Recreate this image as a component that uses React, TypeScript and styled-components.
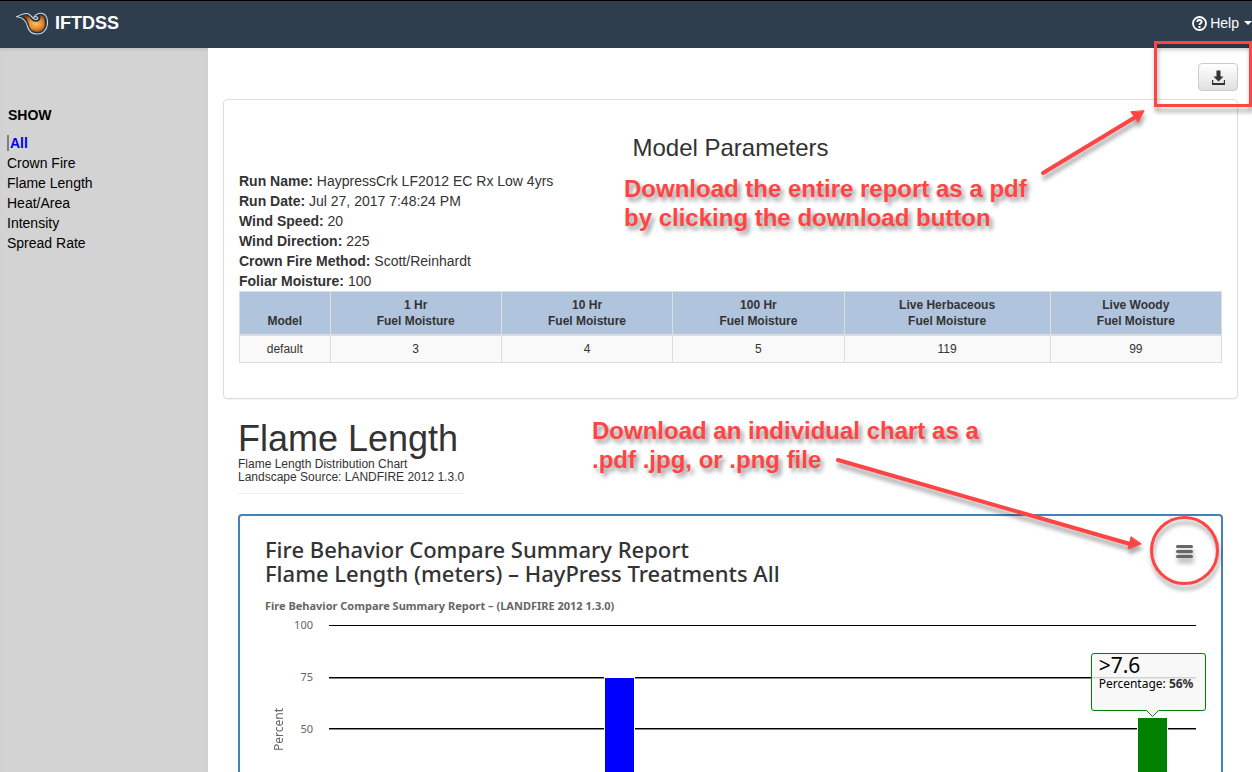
import React from "react";
import styled, { createGlobalStyle } from "styled-components";

const sans = `"Liberation Sans", Arial, sans-serif`;
const chartFont = `"Noto Sans", "Open Sans", sans-serif`;
const red = "#ff4444";

const GlobalStyle = createGlobalStyle`
  *, *::before, *::after { box-sizing: border-box; }
  body {
    margin: 0;
    background: #fff;
    color: #333;
    font: 14px/20px ${sans};
  }
  h1, h2, p, ul { margin: 0; padding: 0; font-weight: 400; }
  button { font-family: inherit; cursor: pointer; }
`;

const Page = styled.div`
  display: flex;
  flex-direction: column;
  height: 100vh;
  overflow: hidden;
`;

const TopBar = styled.header`
  display: flex;
  flex: none;
  align-items: center;
  justify-content: space-between;
  height: 48px;
  padding: 0 0 3px 16px;
  border-top: 1px solid #000;
  background: #2f3e4e;
`;

const Brand = styled.a`
  display: flex;
  align-items: center;
  gap: 7px;
  color: #fff;
  font-size: 18px;
  font-weight: 700;
  text-decoration: none;
`;

const HelpButton = styled.button`
  display: flex;
  align-items: center;
  gap: 3px;
  padding: 0;
  border: 0;
  background: none;
  color: #fff;
  font-size: 14px;
  line-height: 20px;
`;

const Caret = styled.span`
  margin-left: 2px;
  border: 4px solid transparent;
  border-top-color: #fff;
  border-bottom: 0;
`;

const Body = styled.div`
  display: flex;
  flex: 1;
  min-height: 0;
`;

const Sidebar = styled.nav`
  flex: none;
  width: 208px;
  padding: 57px 7px;
  background: #d3d3d3;
  box-shadow: inset 0 4px 4px -3px #bbb;
  color: #000;
`;

const SidebarTitle = styled.h2`
  padding: 0 1px 8px;
  font-size: 14px;
  font-weight: 700;
  line-height: 20px;
`;

const FilterList = styled.ul`
  list-style: none;
`;

const FilterLink = styled.a<{ $active?: boolean }>`
  display: block;
  color: ${(p) => (p.$active ? "#0000ff" : "#000")};
  font-weight: ${(p) => (p.$active ? 700 : 400)};
  text-decoration: none;

  &::before {
    content: "";
    display: ${(p) => (p.$active ? "inline-block" : "none")};
    width: 2px;
    height: 16px;
    margin-right: 1px;
    background: #808080;
    vertical-align: -3px;
  }
`;

const Main = styled.main`
  position: relative;
  flex: 1;
  min-width: 0;
  overflow: hidden;
  padding: 15px 14px 0 15px;
`;

const Toolbar = styled.div`
  display: flex;
  justify-content: flex-end;
  margin-bottom: 8px;
`;

const DownloadButton = styled.button`
  display: grid;
  place-items: center;
  width: 40px;
  height: 28px;
  padding: 0;
  border: 1px solid #ccc;
  border-radius: 4px;
  background: linear-gradient(#fff, #e0e0e0);
`;

const Panel = styled.section`
  padding: 32px 15px 35px;
  border: 1px solid #ddd;
  border-radius: 4px;
  box-shadow: 0 1px 1px rgba(0, 0, 0, 0.05);
`;

const PanelTitle = styled.h2`
  margin-bottom: 7px;
  font-size: 24px;
  line-height: 32px;
  text-align: center;
`;

const FuelTable = styled.table`
  width: 100%;
  border-collapse: collapse;
  font-size: 12px;
  text-align: center;

  th, td { padding: 5px; border: 1px solid #ddd; }
  th {
    border-bottom-width: 2px;
    background: #b0c4de;
    line-height: 16px;
    vertical-align: bottom;
  }
  td { background: #f9f9f9; line-height: 16px; }
`;

const SectionHeading = styled.header`
  width: fit-content;
  margin: 21px 0 0 15px;
  padding-bottom: 9px;
  border-bottom: 1px solid #eee;
  font-size: 12px;
  line-height: 13px;
`;

const SectionTitle = styled.h1`
  font-size: 36px;
  line-height: 38px;
`;

const ChartCard = styled.section`
  position: relative;
  margin: 20px 15px 0;
  padding: 21px 25px 0;
  border: 2px solid #4682b4;
  border-radius: 4px;
  font-family: ${chartFont};
`;

const ChartTitle = styled.h2`
  color: #333;
  font-size: 22px;
  font-weight: 500;
  line-height: 24px;
`;

const ChartSubtitle = styled.p`
  margin-top: 13px;
  color: #666;
  font-size: 11px;
  font-weight: 700;
  line-height: 16px;
`;

const MenuButton = styled.button`
  position: absolute;
  top: 0;
  right: 2px;
  display: grid;
  place-items: center;
  width: 69px;
  height: 69px;
  padding: 2px 0 0;
  border: 3px solid ${red};
  border-radius: 50%;
  background: transparent;
  filter: drop-shadow(1px 5px 2px rgba(0, 0, 0, 0.35));
`;

const Chart = styled.div`
  display: flex;
  margin-top: 11px;
  color: #666;
  font-size: 11px;
`;

const AxisTitle = styled.div`
  height: 208px;
  width: 28px;
  line-height: 28px;
  text-align: center;
  writing-mode: vertical-rl;
  transform: rotate(180deg);
  font-size: 12px;
`;

const AxisLabels = styled.div`
  display: flex;
  flex-direction: column;
  width: 20px;
  margin: -10px 16px 0 0;
  line-height: 20px;
  gap: 32px;
  text-align: right;
`;

const Plot = styled.div`
  position: relative;
  flex: 1;
  height: 208px;
`;

const Tooltip = styled.div`
  position: absolute;
  top: 28px;
  left: 95%;
  width: 115px;
  height: 66px;
  margin-left: -62px;
  padding: 2px 8px;
  color: #000;
  font-size: 12px;
  line-height: 16px;
  white-space: nowrap;

  svg { position: absolute; inset: 0; }
  strong { color: #333; }
`;

const TooltipValue = styled.div`
  position: relative;
  font-size: 21px;
  line-height: 21px;
`;

const TooltipText = styled.div`
  position: relative;
`;

const Highlight = styled.div`
  position: absolute;
  z-index: 2;
  top: 41px;
  right: 0;
  width: 98px;
  height: 66px;
  border: 3px solid ${red};
  filter: drop-shadow(1px 5px 2px rgba(0, 0, 0, 0.35));
  pointer-events: none;
`;

const Callout = styled.p<{ $x: number; $y: number }>`
  position: absolute;
  left: ${(p) => p.$x}px;
  top: ${(p) => p.$y}px;
  color: ${red};
  font-size: 24px;
  font-weight: 700;
  line-height: 29px;
  text-shadow: 3px 4px 4px rgba(0, 0, 0, 0.4);
  white-space: nowrap;
`;

const Arrows = styled.svg`
  position: absolute;
  inset: 0;
  width: 100%;
  height: 100%;
  filter: drop-shadow(1px 5px 2px rgba(0, 0, 0, 0.35));
  pointer-events: none;
`;

const filters = ["All", "Crown Fire", "Flame Length", "Heat/Area", "Intensity", "Spread Rate"];

const runDetails = [
  ["Run Name", "HaypressCrk LF2012 EC Rx Low 4yrs"],
  ["Run Date", "Jul 27, 2017 7:48:24 PM"],
  ["Wind Speed", "20"],
  ["Wind Direction", "225"],
  ["Crown Fire Method", "Scott/Reinhardt"],
  ["Foliar Moisture", "100"],
];

const fuels = [
  ["1 Hr", 3],
  ["10 Hr", 4],
  ["100 Hr", 5],
  ["Live Herbaceous", 119],
  ["Live Woody", 99],
];

const bars = [
  { at: "33.5%", value: 75, color: "#0000ff" },
  { at: "95%", value: 56, color: "#008000" },
];

const FlameLogo = () => (
  <svg width="32" height="23" viewBox="0 0 32 23" aria-hidden="true">
    <defs>
      <radialGradient id="ember" cx="0.6" cy="0.5" r="0.6">
        <stop offset="0" stopColor="#ffc070" />
        <stop offset="0.5" stopColor="#e88a2c" />
        <stop offset="1" stopColor="#7a3c0c" />
      </radialGradient>
    </defs>
    <path
      d="M.7 4.8C4 3 7.500 1.300 11 1.500C15 1.700 15.500 7 19.500 7.500C22 7.700 22.500 5.500 20.500 4.800C19.500 4.500 18.500 4.800 18 5C20 1.500 25 0 28.500 2.500C31.500 5 31.800 9 31.300 13C30.500 18.500 26.500 22 21.500 22C15.500 22 12.500 18.500 11.500 14.500C10.500 10 8.500 5.500 .7 4.800Z"
      fill="#263442"
      stroke="#d5dbe2"
      strokeWidth="1.1"
    />
    <path
      d="M6 4.300C10 2.600 12.500 3.500 14 6C15.500 8.500 17.500 10 20 9.800C23.500 9.500 25.500 7 24 3.200C27.500 3.500 29 6 28.500 9.500C30 15.500 26.500 20 21.500 20C16.500 20 14 17 13.200 13.500C12 8.500 10.500 5 6 4.300Z"
      fill="url(#ember)"
    />
  </svg>
);

const QuestionIcon = () => (
  <svg width="15" height="15" viewBox="0 0 15 15" fill="none" stroke="#fff" aria-hidden="true">
    <circle cx="7.500" cy="7.500" r="6.500" strokeWidth="1.800" />
    <path d="M5.300 6C5.300 3.300 9.700 3.300 9.700 5.800C9.700 7.400 7.500 7.300 7.500 9" strokeWidth="1.900" />
    <path d="M7.500 10v2" strokeWidth="2" />
  </svg>
);

const DownloadIcon = () => (
  <svg width="14" height="15" viewBox="0 0 14 15" fill="#333" aria-hidden="true">
    <path d="M5.500 .5h4v6h3L7.500 11.500L2.500 6.500h3z" />
    <path d="M1 10h1.200v3h10.600V10H14v5H1z" />
  </svg>
);

const MenuIcon = () => (
  <svg width="17" height="14" viewBox="0 0 17 14" aria-hidden="true">
    <path d="M1.500 1.500h14M1.500 6.500h14M1.500 11.500h14" stroke="#666" strokeWidth="3" strokeLinecap="round" />
  </svg>
);

const PlotArea = () => (
  <svg width="100%" height="208" role="img" aria-label="Flame length percentages">
    {[0, 52, 103, 156].map((y) => (
      <g key={y}>
        <rect width="100%" y={y} height="1" fill="#000" />
        <rect width="100%" y={y === 0 ? 0 : y + 1} height="1" fill={y === 0 ? "#000" : "#888"} />
      </g>
    ))}
    {bars.map((bar) => {
      const height = Math.floor(bar.value * 2.08);
      return (
        <g key={bar.at} transform="translate(-15 0)" shapeRendering="crispEdges">
          <rect x={bar.at} y={208 - height} width="30" height={height} fill={bar.color} stroke="#fff" />
        </g>
      );
    })}
  </svg>
);

export default function App() {
  return (
    <Page>
      <GlobalStyle />
      <TopBar>
        <Brand href="#home">
          <FlameLogo />
          IFTDSS
        </Brand>
        <HelpButton type="button">
          <QuestionIcon />
          Help
          <Caret />
        </HelpButton>
      </TopBar>
      <Highlight />
      <Body>
        <Sidebar aria-label="Report sections">
          <SidebarTitle>SHOW</SidebarTitle>
          <FilterList>
            {filters.map((name, i) => (
              <li key={name}>
                <FilterLink href="#report" $active={i === 0}>{name}</FilterLink>
              </li>
            ))}
          </FilterList>
        </Sidebar>
        <Main>
          <Toolbar>
            <DownloadButton type="button" aria-label="Download report">
              <DownloadIcon />
            </DownloadButton>
          </Toolbar>
          <Panel>
            <PanelTitle>Model Parameters</PanelTitle>
            {runDetails.map(([label, value]) => (
              <p key={label}>
                <strong>{label}:</strong> {value}
              </p>
            ))}
            <FuelTable>
              <thead>
                <tr>
                  <th scope="col">Model</th>
                  {fuels.map(([name]) => (
                    <th key={name} scope="col">
                      {name}
                      <br />
                      Fuel Moisture
                    </th>
                  ))}
                </tr>
              </thead>
              <tbody>
                <tr>
                  <td>default</td>
                  {fuels.map(([name, value]) => (
                    <td key={name}>{value}</td>
                  ))}
                </tr>
              </tbody>
            </FuelTable>
          </Panel>
          <SectionHeading>
            <SectionTitle>Flame Length</SectionTitle>
            <p>Flame Length Distribution Chart</p>
            <p>Landscape Source: LANDFIRE 2012 1.3.0</p>
          </SectionHeading>
          <ChartCard>
            <ChartTitle>
              Fire Behavior Compare Summary Report
              <br />
              Flame Length (meters) – HayPress Treatments All
            </ChartTitle>
            <ChartSubtitle>Fire Behavior Compare Summary Report – (LANDFIRE 2012 1.3.0)</ChartSubtitle>
            <MenuButton type="button" aria-label="Chart menu">
              <MenuIcon />
            </MenuButton>
            <Chart>
              <AxisTitle>Percent</AxisTitle>
              <AxisLabels>
                <span>100</span>
                <span>75</span>
                <span>50</span>
              </AxisLabels>
              <Plot>
                <PlotArea />
                <Tooltip>
                  <svg width="115" height="66" aria-hidden="true">
                    <path
                      d="M3 .5H112Q114.500 .5 114.500 3V55Q114.500 57.500 112 57.500H67.500L61.500 63.500L55.500 57.500H3Q.5 57.500 .5 55V3Q.5 .5 3 .5Z"
                      fill="rgba(247,247,247,0.85)"
                      stroke="#008000"
                    />
                  </svg>
                  <TooltipValue>&gt;7.6</TooltipValue>
                  <TooltipText>
                    Percentage: <strong>56%</strong>
                  </TooltipText>
                </Tooltip>
              </Plot>
            </Chart>
          </ChartCard>
          <Arrows aria-hidden="true">
            <g stroke={red} strokeWidth="4" strokeLinecap="round" fill={red}>
              <path d="M835 125L926 70" />
              <path d="M630 412L922 496" />
              <path d="M936 63L930 74L923 64Z" strokeWidth="1" />
              <path d="M933 496L920 501L923 489Z" strokeWidth="1" />
            </g>
          </Arrows>
          <Callout $x={416} $y={126}>
            Download the entire report as a pdf
            <br />
            by clicking the download button
          </Callout>
          <Callout $x={384} $y={368}>
            Download an individual chart as a
            <br />
            .pdf .jpg, or .png file
          </Callout>
        </Main>
      </Body>
    </Page>
  );
}
